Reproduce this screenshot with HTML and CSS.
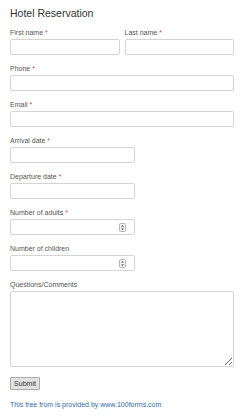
FILE: index.html
```html
<!DOCTYPE html>
<html lang="en">
<head>
    <meta charset="UTF-8">
    <title>Hotel Reservation</title>
    <link rel="stylesheet" href="styles.css">
</head>
<body>
    <form class="form">
        <h1 class="title">Hotel Reservation</h1>

        <div class="row">
            <div class="field">
                <label>First name <span class="req">*</span></label>
                <input type="text" class="input">
            </div>
            <div class="field">
                <label>Last name <span class="req">*</span></label>
                <input type="text" class="input">
            </div>
        </div>

        <div class="field">
            <label>Phone <span class="req">*</span></label>
            <input type="text" class="input">
        </div>

        <div class="field">
            <label>Email <span class="req">*</span></label>
            <input type="text" class="input">
        </div>

        <div class="field short">
            <label>Arrival date <span class="req">*</span></label>
            <input type="text" class="input">
        </div>

        <div class="field short">
            <label>Departure date <span class="req">*</span></label>
            <input type="text" class="input">
        </div>

        <div class="field short">
            <label>Number of adults <span class="req">*</span></label>
            <div class="input select">
                <svg class="spin" width="7" height="9" viewBox="0 0 7 9">
                    <rect x="0.5" y="0.5" width="6" height="8" rx="1" fill="#f4f4f4" stroke="#b5b5b5"/>
                    <path d="M2 3.6 L3.5 2 L5 3.6 Z M2 5.4 L3.5 7 L5 5.4 Z" fill="#444"/>
                </svg>
            </div>
        </div>

        <div class="field short">
            <label>Number of children</label>
            <div class="input select">
                <svg class="spin" width="7" height="9" viewBox="0 0 7 9">
                    <rect x="0.5" y="0.5" width="6" height="8" rx="1" fill="#f4f4f4" stroke="#b5b5b5"/>
                    <path d="M2 3.6 L3.5 2 L5 3.6 Z M2 5.4 L3.5 7 L5 5.4 Z" fill="#444"/>
                </svg>
            </div>
        </div>

        <div class="field">
            <label>Questions/Comments</label>
            <textarea class="input area"></textarea>
        </div>

        <div class="actions">
            <button type="button" class="submit">Submit</button>
        </div>

        <a class="credit" href="#">This free from is provided by www.100forms.com</a>
    </form>
</body>
</html>
```

FILE: styles.css
```css
body {
    margin: 0;
    background: #fff;
    font-family: "Liberation Sans", Arial, sans-serif;
    color: #555;
}
.form {
    display: flex;
    flex-direction: column;
    gap: 9px;
    padding: 7px 10px 0 10px;
    width: 224px;
}
.title {
    margin: 0 0 0 0;
    font-size: 10.5px;
    line-height: 12px;
    font-weight: normal;
    color: #333;
    height: 12px;
}
.row {
    display: flex;
    gap: 5px;
}
.row .field {
    flex: 1;
}
.field {
    display: flex;
    flex-direction: column;
    gap: 2px;
}
.field.short {
    width: 125px;
}
.field label {
    font-size: 7px;
    line-height: 9px;
    height: 9px;
    color: #555;
}
.req {
    color: #d0454c;
}
.input {
    box-sizing: border-box;
    height: 16px;
    width: 100%;
    margin: 0;
    border: 1px solid #d4d4d4;
    border-radius: 2px;
    background: #fff;
    padding: 0 3px;
    font-size: 7px;
}
.select {
    display: flex;
    align-items: center;
    justify-content: flex-end;
    padding-right: 8px;
}
.spin {
    display: block;
}
.area {
    height: 76px;
    resize: vertical;
}
.actions {
    display: flex;
    margin-top: 1px;
}
.submit {
    box-sizing: border-box;
    height: 13px;
    width: 30px;
    padding: 0;
    font-family: "Liberation Sans", Arial, sans-serif;
    font-size: 7px;
    color: #333;
    background: #e2e2e2;
    border: 1px solid #ababab;
    border-radius: 1px;
}
.credit {
    margin-top: 1px;
    font-size: 7px;
    line-height: 9px;
    color: #2f6ea8;
    text-decoration: none;
}
```
